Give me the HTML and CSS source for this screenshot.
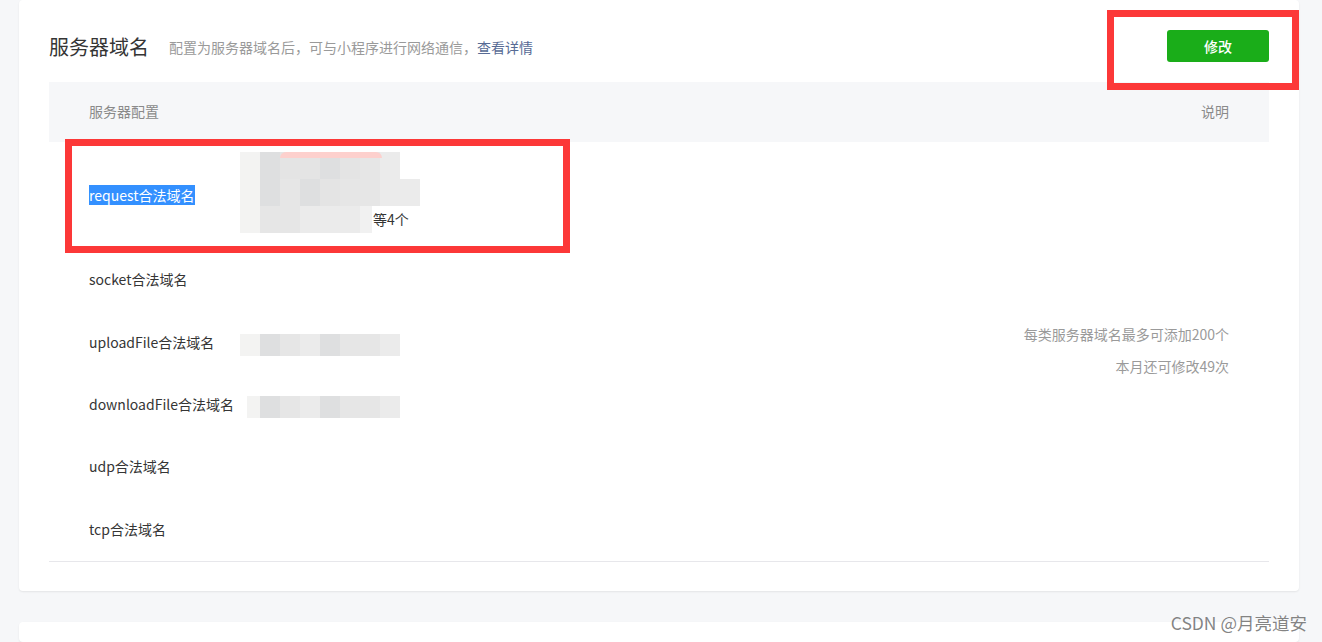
FILE: index.html
```html
<!DOCTYPE html>
<html lang="zh-CN">
<head>
<meta charset="utf-8">
<title>服务器域名</title>
<link rel="stylesheet" href="styles.css">
</head>
<body>
<div class="page">
  <section class="card">
    <div class="card-head">
      <div class="head-left">
        <h2 class="title">服务器域名</h2>
        <p class="desc">配置为服务器域名后，可与小程序进行网络通信，<a class="link" href="#">查看详情</a></p>
      </div>
      <button class="btn-primary" type="button">修改</button>
    </div>

    <div class="table">
      <div class="thead">
        <span>服务器配置</span>
        <span>说明</span>
      </div>
      <div class="tbody">
        <div class="cell label r1"><span class="selected">request合法域名</span></div>
        <div class="cell domains r1">
          <div class="dline"><span class="mosaic m-a pink"><i class="t1"></i><i class="t3"></i><i class="t2"></i><i class="t2"></i><i class="t3"></i><i class="t2"></i><i class="t4"></i><i class="t5"></i></span></div>
          <div class="dline"><span class="mosaic m-b"><i class="t1"></i><i class="t3"></i><i class="t4"></i><i class="t3"></i><i class="t2"></i><i class="t4"></i><i class="t4"></i><i class="t5"></i><i class="t5"></i></span></div>
          <div class="dline"><span class="mosaic m-c"><i class="t1"></i><i class="t4"></i><i class="t4"></i><i class="t5"></i><i class="t5"></i><i class="t5"></i><i class="t6"></i></span><span class="more">等4个</span></div>
        </div>

        <div class="cell label r2">socket合法域名</div>
        <div class="cell domains r2"></div>

        <div class="cell label r3">uploadFile合法域名</div>
        <div class="cell domains r3"><span class="mosaic m-d"><i class="t1"></i><i class="t3"></i><i class="t4"></i><i class="t5"></i><i class="t3"></i><i class="t4"></i><i class="t4"></i><i class="t5"></i></span></div>

        <div class="cell label r4">downloadFile合法域名</div>
        <div class="cell domains r4"><span class="mosaic m-e"><i class="t1"></i><i class="t3"></i><i class="t4"></i><i class="t5"></i><i class="t3"></i><i class="t4"></i><i class="t4"></i><i class="t5"></i></span></div>

        <div class="cell label r5">udp合法域名</div>
        <div class="cell domains r5"></div>

        <div class="cell label r6">tcp合法域名</div>
        <div class="cell domains r6"></div>

        <div class="notes">
          <p>每类服务器域名最多可添加200个</p>
          <p>本月还可修改49次</p>
        </div>
      </div>
    </div>
  </section>

  <section class="card card-next"></section>

  <div class="mark mark-btn"></div>
  <div class="mark mark-row"></div>
  <div class="watermark">CSDN @月亮道安</div>
</div>
</body>
</html>
```

FILE: styles.css
```css
* { box-sizing: border-box; }

html, body {
  margin: 0;
  padding: 0;
  background: #f6f7f9;
  font-family: "Noto Sans CJK SC", "Microsoft YaHei", sans-serif;
  color: #353535;
  font-size: 14px;
  overflow: hidden;
}

.page {
  position: relative;
  width: 1322px;
  height: 642px;
  padding-left: 19px;
  overflow: hidden;
}

.card {
  width: 1280px;
  background: #fff;
  border-radius: 4px;
  box-shadow: 0 1px 2px rgba(0, 0, 0, 0.08);
  padding: 30px 30px 29px;
}

.card-head {
  display: flex;
  align-items: center;
  justify-content: space-between;
  height: 34px;
  margin-bottom: 18px;
}

.head-left {
  display: flex;
  align-items: center;
  gap: 20px;
}

.title {
  margin: 0;
  font-size: 20px;
  font-weight: 400;
  line-height: 28px;
  color: #353535;
}

.desc {
  margin: 0;
  font-size: 14px;
  line-height: 20px;
  color: #9a9a9a;
}

.link {
  color: #576b95;
  text-decoration: none;
}

.btn-primary {
  width: 102px;
  height: 32px;
  border: 0;
  border-radius: 3px;
  background: #1aad19;
  color: #fff;
  font-family: inherit;
  font-size: 14px;
  font-weight: 500;
  padding: 0;
  margin-top: -2px;
}

.thead {
  display: flex;
  justify-content: space-between;
  align-items: center;
  height: 60px;
  padding: 0 40px 2px;
  background: #f6f7f9;
  color: #8a8a8a;
  font-size: 14px;
}

.tbody {
  display: grid;
  grid-template-columns: 151px 1fr auto;
  grid-template-rows: 107px 63px 62px 62px 63px 62px;
  padding: 0 40px;
  border-bottom: 1px solid #e7e7eb;
}

.cell {
  display: flex;
  align-items: center;
  line-height: 20px;
}

.label {
  grid-column: 1;
  padding-bottom: 3px;
}
.domains { grid-column: 2; }

.r1 { grid-row: 1; }
.r2 { grid-row: 2; }
.r3 { grid-row: 3; }
.r4 { grid-row: 4; }
.r5 { grid-row: 5; }
.r6 { grid-row: 6; }

.label.r1 { padding-bottom: 2px; }

.domains.r1 {
  flex-direction: column;
  align-items: flex-start;
  justify-content: center;
  padding-bottom: 6px;
}

.selected {
  background: #3390ff;
  color: #fff;
  line-height: 20px;
}

.dline {
  display: flex;
  align-items: center;
  height: 27px;
}

.mosaic {
  display: inline-flex;
  position: relative;
  height: 27px;
  filter: blur(0.6px);
}

.mosaic i {
  display: block;
  width: 20px;
  height: 100%;
}

.mosaic .t1 { background: #f3f3f2; }
.mosaic .t2 { background: #e4e4e4; }
.mosaic .t3 { background: #dedfe0; }
.mosaic .t4 { background: #e6e6e6; }
.mosaic .t5 { background: #ebebeb; }
.mosaic .t6 { background: #f1f1f1; width: 12px; }

.pink::before {
  content: "";
  position: absolute;
  left: 40px;
  top: 0;
  width: 102px;
  height: 6px;
  border-radius: 6px 6px 0 0;
  background: #fdd0cd;
}

.m-d, .m-e { height: 22px; margin-top: 4px; }
.m-e { margin-left: 7px; }
.m-e .t1 { width: 13px; }

.more {
  margin-left: 1px;
  line-height: 20px;
  color: #353535;
  position: relative;
  top: -1px;
}

.notes {
  grid-column: 3;
  grid-row: 1 / span 6;
  align-self: center;
  text-align: right;
  color: #9a9a9a;
  line-height: 32px;
  padding-bottom: 4px;
}

.notes p { margin: 0; }

.card-next {
  margin-top: 31px;
  height: 20px;
  padding: 0;
}

.mark {
  position: absolute;
  border: 7px solid #fc3838;
}

.mark-btn {
  left: 1107px;
  top: 10px;
  width: 192px;
  height: 80px;
}

.mark-row {
  left: 65px;
  top: 139px;
  width: 505px;
  height: 114px;
}

.watermark {
  position: absolute;
  right: 15px;
  top: 611px;
  font-size: 17.5px;
  line-height: 24px;
  color: rgba(110, 110, 110, 0.85);
  font-family: "Noto Sans CJK SC", "Liberation Sans", sans-serif;
}
```
